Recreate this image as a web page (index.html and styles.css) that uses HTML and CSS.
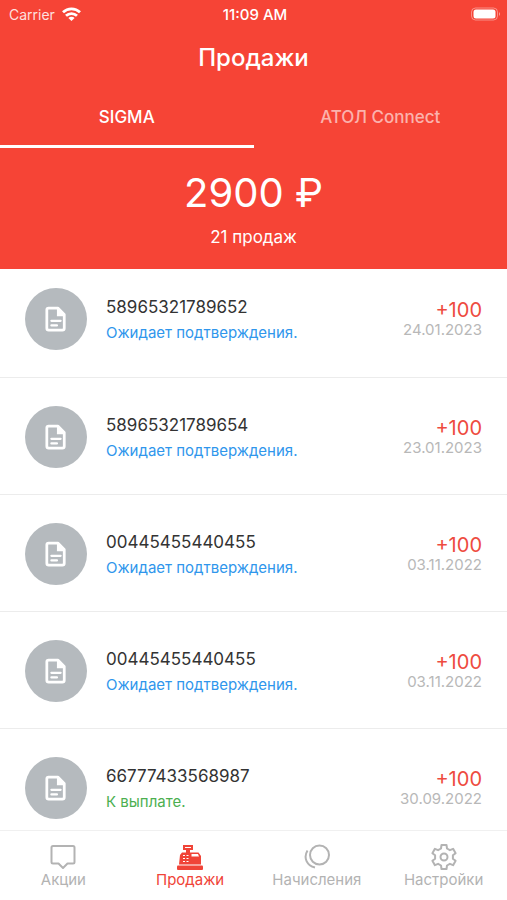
FILE: index.html
```html
<!DOCTYPE html>
<html lang="ru">
<head>
  <meta charset="UTF-8">
  <meta name="viewport" content="width=device-width, initial-scale=1">
  <title>Продажи</title>
  <link rel="stylesheet" href="styles.css">
</head>
<body>
  <svg width="0" height="0" class="sprite">
    <symbol id="doc" viewBox="0 0 24 28">
      <path d="M4 2h10l7 7v15a2 2 0 0 1-2 2H4a2 2 0 0 1-2-2V4a2 2 0 0 1 2-2z" fill="none" stroke="#fff" stroke-width="3" stroke-linejoin="round"/>
      <path d="M13 2v9h8v-2l-6-7z" fill="#fff"/>
      <path d="M7 16h10M7 21h6" stroke="#fff" stroke-width="2.5" stroke-linecap="round"/>
    </symbol>
  </svg>

  <header class="header">
    <div class="status">
      <div class="carrier">
        <span>Carrier</span>
        <svg width="19" height="14" viewBox="0 0 19 14" fill="none" stroke="#fff" stroke-width="2.8">
          <path d="M1 5.2a12.3 12.3 0 0 1 17 0"/>
          <path d="M4 8.8a8 8 0 0 1 11 0"/>
          <path d="M9.5 14 6.4 11a4.400 4.400 0 0 1 6.200 0z" fill="#fff" stroke="none"/>
        </svg>
      </div>
      <div class="time">11:09 AM</div>
      <div class="battery">
        <svg width="31" height="14" viewBox="0 0 31 14">
          <rect x="1.500" y="1" width="26" height="12" rx="4" fill="none" stroke="#fff" stroke-opacity=".4"/>
          <rect x="3.500" y="2.500" width="22" height="9" rx="2.500" fill="#fff"/>
          <path d="M29 5v4a2.500 2.500 0 0 0 0-4z" fill="#fff" fill-opacity=".5"/>
        </svg>
      </div>
    </div>
    <h1 class="title">Продажи</h1>
    <div class="tabs">
      <button class="tab active">SIGMA</button>
      <button class="tab">АТОЛ Connect</button>
    </div>
    <div class="total">2900 ₽</div>
    <div class="count">21 продаж</div>
  </header>

  <main class="list">
    <div class="row">
      <div class="avatar"><svg width="22" height="26"><use href="#doc"/></svg></div>
      <div class="info">
        <div class="number">58965321789652</div>
        <div class="state">Ожидает подтверждения.</div>
      </div>
      <div class="side">
        <div class="sum">+100</div>
        <div class="date">24.01.2023</div>
      </div>
    </div>
    <div class="row">
      <div class="avatar"><svg width="22" height="26"><use href="#doc"/></svg></div>
      <div class="info">
        <div class="number">58965321789654</div>
        <div class="state">Ожидает подтверждения.</div>
      </div>
      <div class="side">
        <div class="sum">+100</div>
        <div class="date">23.01.2023</div>
      </div>
    </div>
    <div class="row">
      <div class="avatar"><svg width="22" height="26"><use href="#doc"/></svg></div>
      <div class="info">
        <div class="number">00445455440455</div>
        <div class="state">Ожидает подтверждения.</div>
      </div>
      <div class="side">
        <div class="sum">+100</div>
        <div class="date">03.11.2022</div>
      </div>
    </div>
    <div class="row">
      <div class="avatar"><svg width="22" height="26"><use href="#doc"/></svg></div>
      <div class="info">
        <div class="number">00445455440455</div>
        <div class="state">Ожидает подтверждения.</div>
      </div>
      <div class="side">
        <div class="sum">+100</div>
        <div class="date">03.11.2022</div>
      </div>
    </div>
    <div class="row">
      <div class="avatar"><svg width="22" height="26"><use href="#doc"/></svg></div>
      <div class="info">
        <div class="number">66777433568987</div>
        <div class="state paid">К выплате.</div>
      </div>
      <div class="side">
        <div class="sum">+100</div>
        <div class="date">30.09.2022</div>
      </div>
    </div>
  </main>

  <nav class="nav">
    <a href="#" class="item">
      <svg width="26" height="26" viewBox="0 0 26 26" fill="none" stroke="currentColor" stroke-width="2" stroke-linejoin="round">
        <path d="M3 2h20a1.500 1.500 0 0 1 1.500 1.500v14.500a1.500 1.500 0 0 1-1.500 1.500h-5.500L13 24l-4.500-4.500H3A1.500 1.500 0 0 1 1.500 18V3.500A1.500 1.500 0 0 1 3 2z"/>
      </svg>
      <span>Акции</span>
    </a>
    <a href="#" class="item current">
      <svg width="26" height="26" viewBox="0 0 26 26" fill="currentColor">
        <path fill-rule="evenodd" d="M6 1h10v5h-3v2.500h8.500L24 12v8.500H2L3 11l2-2.500h4V6H6zM8 3v1h6V3zM14.500 10v2.500h7.500l-1-2.500zM6 11v1h2v-1zM9.500 11v1h2v-1zM6 14v1h2v-1zM9.500 14v1h2v-1zM6 17v1h2v-1zM9.500 17v1h2v-1z"/>
        <rect x="0" y="21.500" width="26" height="4.500" rx="1"/>
      </svg>
      <span>Продажи</span>
    </a>
    <a href="#" class="item">
      <svg width="26" height="26" viewBox="0 0 26 26" fill="none" stroke="currentColor" stroke-width="2">
        <circle cx="15.500" cy="11" r="9.500"/>
        <path d="M3.500 6.500C-1 14 3 21.500 11 23.500"/>
      </svg>
      <span>Начисления</span>
    </a>
    <a href="#" class="item">
      <svg width="26" height="26" viewBox="0 0 26 26" fill="none" stroke="currentColor" stroke-width="2" stroke-linejoin="round">
        <path d="M10 4.500 10.500 1h5l.5 3.500 2.900 1.700 3.200-1.400 2.500 4.400-2.700 2.100v3.400l2.700 2.100-2.500 4.400-3.200-1.400-2.900 1.700-.5 3.500h-5l-.5-3.500-2.900-1.700-3.200 1.400-2.500-4.400 2.700-2.100v-3.400L1.400 9.200l2.500-4.400 3.200 1.400z"/>
        <circle cx="13" cy="13" r="3.500"/>
      </svg>
      <span>Настройки</span>
    </a>
  </nav>
</body>
</html>
```
FILE: styles.css
```css
* {
  box-sizing: border-box;
}

body {
  font-family: Inter, "Liberation Sans", sans-serif;
  background: white;
  display: flex;
  flex-direction: column;
  height: 100vh;
  margin: 0;
}

.sprite {
  display: none;
}

.header {
  flex: none;
  background: #f64436;
  color: white;
  text-align: center;
  padding-bottom: 20px;
}

.status {
  display: flex;
  align-items: center;
  height: 28px;
  padding: 0 6px 0 9px;
  font-size: 14px;
}

.carrier, .battery {
  flex: 1;
  display: flex;
  align-items: center;
  gap: 7px;
}

.carrier {
  color: rgba(255,255,255,0.85);
}

.battery {
  justify-content: flex-end;
}

.time {
  font-size: 15px;
  font-weight: 500;
}

.title {
  margin: 0;
  font-size: 24px;
  line-height: 60px;
  font-weight: 500;
}

.tabs {
  display: flex;
}

.tab {
  flex: 1;
  height: 60px;
  padding: 0;
  border: none;
  border-bottom: 3px solid transparent;
  background: none;
  color: rgba(255,255,255,0.6);
  font-family: inherit;
  font-size: 17px;
  font-weight: 500;
}

.tab.active {
  color: white;
  border-color: white;
}

.total {
  padding-top: 20px;
  font-size: 40px;
  line-height: 50px;
}

.count {
  padding-top: 7px;
  font-size: 17px;
  line-height: 24px;
}

.list {
  flex: 1;
  min-height: 0;
  overflow: hidden;
}

.row {
  display: flex;
  height: 117px;
  padding: 28px 25px 0;
  border-bottom: 1px solid #ececec;
}

.row:first-child {
  height: 109px;
  padding-top: 19px;
}

.avatar {
  display: flex;
  align-items: center;
  justify-content: center;
  width: 62px;
  height: 62px;
  border-radius: 50%;
  background: #b5babe;
}

.info {
  flex: 1;
  padding: 7px 0 0 19px;
}

.number {
  color: #333333;
  font-size: 17px;
  line-height: 25px;
}

.state {
  color: #2f96ec;
  font-size: 15px;
  line-height: 26px;
}

.state.paid {
  color: #4caf50;
}

.side {
  padding-top: 10px;
  text-align: right;
}

.sum {
  color: #ee4b40;
  font-size: 20px;
  line-height: 24px;
}

.date {
  color: #b8b8b8;
  font-size: 15px;
  line-height: 16px;
}

.nav {
  flex: none;
  display: flex;
  height: 70px;
  border-top: 1px solid #f0f0f0;
  background: white;
}

.item {
  flex: 1;
  display: flex;
  flex-direction: column;
  align-items: center;
  padding-top: 13px;
  color: #b3b3b3;
  font-size: 15px;
  line-height: 20px;
  text-decoration: none;
}

.item.current {
  color: #f04438;
}
```
